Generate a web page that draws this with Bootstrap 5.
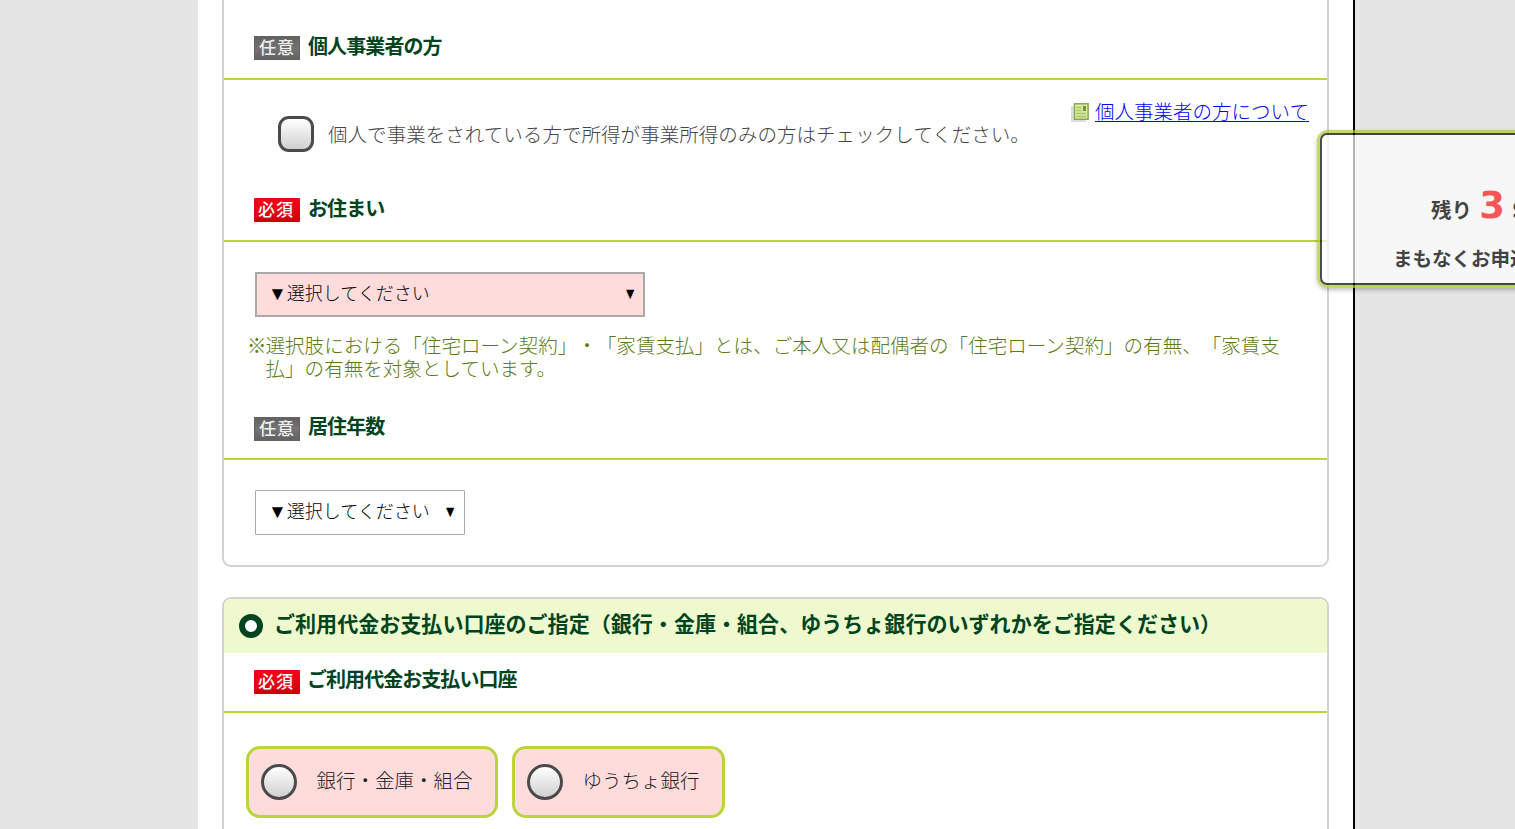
<!DOCTYPE html>
<html lang="ja">
<head>
<meta charset="utf-8">
<meta name="viewport" content="width=device-width, initial-scale=1">
<title>お申込み</title>
<link href="https://cdn.jsdelivr.net/npm/bootstrap@5.3.0/dist/css/bootstrap.min.css" rel="stylesheet">
<style>
body{background:#e5e5e5;font-family:"Noto Sans CJK JP",sans-serif;font-size:19.53px;font-weight:300;line-height:23px;color:#444;height:829px;overflow:hidden;text-spacing-trim:space-all}
.page-main{width:1157px;height:829px;margin-left:198px;padding:0 24px;border-right:2px solid #000;overflow:hidden}
.form-panel{border:2px solid #d3d3d3;width:1107px}
.panel-first{border-top:0;border-radius:0 0 9px 9px;height:567px;margin-bottom:30px}
.panel-second{border-radius:9px 9px 0 0;border-bottom:0;height:232px;overflow:hidden}
.item-head{height:80px;border-bottom:2px solid #bcd43b;padding:34px 0 0 30px;color:#00441f}
.item-head h3{font-size:20px;font-weight:700;line-height:24px;margin:0 0 0 8px;letter-spacing:-.9px}
.item-head.tight{height:60px;padding-top:14px}
.item-head.tight h3{margin-left:7px;letter-spacing:-.95px}
.tag{width:46px;height:24px;margin-top:2px;font-size:17px;line-height:22px;font-weight:500;text-align:center;color:#fff;letter-spacing:1px}
.tag-opt{background:linear-gradient(#626262,#747474 50%,#626262);border:1px solid #626262;line-height:20px;color:#eee}
.tag-req{background:linear-gradient(#fb0019,#e50012 60%,#c9000d);border-radius:1px;padding-right:2px}
.tag-low,.tight .tag{margin-top:3px}
.body-check{height:82px;padding:36px 18px 0 54px}
.box{width:36px;height:36px;border:3px solid #4a4a4a;border-radius:11px;background:linear-gradient(#fff,#d0d0d0);flex:none}
.box.round{border-radius:50%}
.check-text{margin:-1px 0 0 14px;letter-spacing:.03px}
.about a{color:#00f;text-underline-offset:2px;text-decoration-thickness:1px;margin-top:-2px}
.about{margin-top:-17px}
.about svg{margin-top:2px}
.body-home{height:138px;padding:30px 0 0 31px}
.pick{height:45px;border:1px solid #a9a9a9;color:#000;font-size:18px;padding:0 7px 3px 12px;border-radius:1px;background:#fff}
.pick.wide{width:390px;border-width:2px;background:#ffdcdc;padding:0 6px 3px 11px;border-radius:0}
.pick.short{width:210px}
.tri{font-family:"DejaVu Sans",sans-serif;font-size:19px}
.tri.end{font-size:14px;padding-top:1px;transform:scaleY(1.15)}
.hint{color:#5b7a12;margin:16px 0 0 -8px}
.hint-mark{width:18.5px;flex:none}
.hint-text{white-space:nowrap;letter-spacing:.03px}
.body-years{padding:30px 0 0 31px}
.sec-head{height:54px;background:#eefacd;padding:0 0 4px 15px;color:#00441f}
.sec-head h2{font-size:21.05px;line-height:28px;font-weight:700;margin:-3px 0 0 11px;white-space:nowrap}
.ring{width:24px;height:24px;border:6px solid #00441f;border-radius:50%;margin-top:3px;background:#fff}
.body-bank{padding:33px 0 0 22px;gap:14px}
.choice{height:72px;border:3px solid #bcd43b;border-radius:14px;background:#ffdcdc;color:#222;padding:0 12px}
.choice-text{margin:-5px 0 0 19.5px}
.choice.bank{width:252px}.choice.post{width:213px}
.remain{position:absolute;left:1317px;top:130px;width:330px;height:158px;border:3px solid #abc92d;border-radius:11px;background:#abc92d;opacity:.7;box-shadow:0 2px 4px rgba(0,0,0,.35)}
.remain-in{height:152px;border:2px solid #000;border-radius:7px;background:#fff;color:#000;font-weight:700;white-space:nowrap;padding:49px 0 0 71px}
.remain-in .step{font-family:"DejaVu Sans","Noto Sans CJK JP",sans-serif;line-height:44px;margin-left:38px;font-size:20.5px}
.remain-in .num{font-size:37px;color:#ff1a1a}
.remain-in .soon{margin-top:13px}
</style>
</head>
<body>
<main class="page-main bg-white">
<section class="form-panel panel-first">
<div class="item-head d-flex align-items-start"><span class="tag tag-opt">任意</span><h3>個人事業者の方</h3></div>
<div class="body-check d-flex justify-content-between align-items-start">
<div class="d-flex align-items-center"><span class="box"></span><span class="check-text">個人で事業をされている方で所得が事業所得のみの方はチェックしてください。</span></div>
<div class="about d-flex align-items-center"><svg width="20" height="22" viewBox="0 0 20 22"><path fill="#ddd" d="M0 5h15v16H0z"/><path fill="#d8eba0" stroke="#8da84b" stroke-width="1.5" d="M3.5 2.8h13.6v15.5H3.5z"/><path fill="none" stroke="#a8c568" stroke-width="1.3" d="M5.5 6.5h5M5.5 9.5h5M5.5 12.5h9.5M5.5 15.5h9.5"/><path fill="#76913c" d="M12 5h3v5h-3z"/></svg><a href="#" class="ms-1">個人事業者の方について</a></div>
</div>
<div class="item-head d-flex align-items-start"><span class="tag tag-req">必須</span><h3>お住まい</h3></div>
<div class="body-home">
<div class="pick wide d-flex align-items-center justify-content-between"><span><span class="tri">▼</span>選択してください</span><span class="tri end">▼</span></div>
<div class="hint d-flex"><span class="hint-mark">※</span><div class="hint-text"><div>選択肢における「住宅ローン契約」・「家賃支払」とは、ご本人又は配偶者の「住宅ローン契約」の有無、「家賃支</div><div>払」の有無を対象としています。</div></div></div>
</div>
<div class="item-head d-flex align-items-start"><span class="tag tag-opt tag-low">任意</span><h3>居住年数</h3></div>
<div class="body-years">
<div class="pick short d-flex align-items-center justify-content-between"><span><span class="tri">▼</span>選択してください</span><span class="tri end">▼</span></div>
</div>
</section>
<section class="form-panel panel-second">
<div class="sec-head d-flex align-items-center"><span class="ring"></span><h2>ご利用代金お支払い口座のご指定（銀行・金庫・組合、ゆうちょ銀行のいずれかをご指定ください）</h2></div>
<div class="item-head tight d-flex align-items-start"><span class="tag tag-req">必須</span><h3>ご利用代金お支払い口座</h3></div>
<div class="body-bank d-flex">
<label class="choice bank d-flex align-items-center"><span class="box round"></span><span class="choice-text">銀行・金庫・組合</span></label>
<label class="choice post d-flex align-items-center"><span class="box round"></span><span class="choice-text">ゆうちょ銀行</span></label>
</div>
</section>
</main>
<aside class="remain"><div class="remain-in"><div class="step">残り <span class="num">3</span> S</div><div class="soon">まもなくお申込</div></div></aside>
<script src="https://cdn.jsdelivr.net/npm/bootstrap@5.3.0/dist/js/bootstrap.bundle.min.js"></script>
</body>
</html>
